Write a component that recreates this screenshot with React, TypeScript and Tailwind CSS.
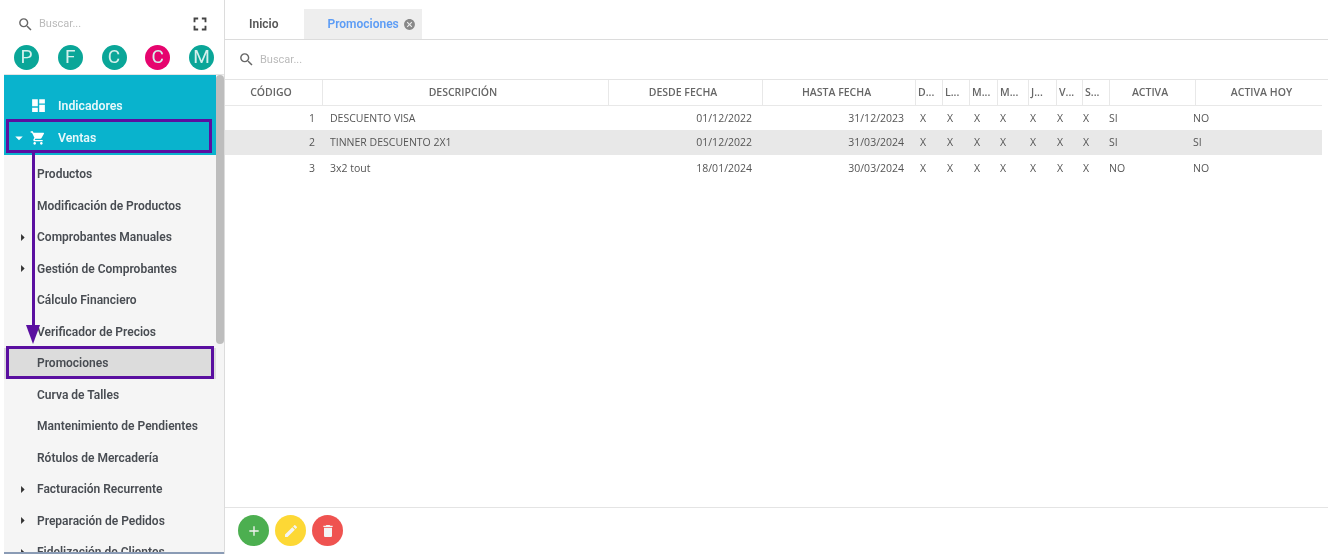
import { MdAdd, MdArrowDropDown, MdArrowRight, MdCancel, MdDashboard, MdDelete, MdEdit, MdFullscreen, MdSearch, MdShoppingCart } from "react-icons/md";

const gridCols = "grid w-[1097px] grid-cols-[98px_286px_154px_153px_27px_27px_28px_31px_28px_26px_27px_86px_126px]";

const shortcuts = [
  { letter: "P", color: "bg-[#0aa698]" },
  { letter: "F", color: "bg-[#0aa698]" },
  { letter: "C", color: "bg-[#0aa698]" },
  { letter: "C", color: "bg-[#e6046e]" },
  { letter: "M", color: "bg-[#0aa698]" },
];

const menuItems = [
  { label: "Productos" },
  { label: "Modificación de Productos" },
  { label: "Comprobantes Manuales", sub: true },
  { label: "Gestión de Comprobantes", sub: true },
  { label: "Cálculo Financiero" },
  { label: "Verificador de Precios" },
  { label: "Promociones", active: true },
  { label: "Curva de Talles" },
  { label: "Mantenimiento de Pendientes" },
  { label: "Rótulos de Mercadería" },
  { label: "Facturación Recurrente", sub: true },
  { label: "Preparación de Pedidos", sub: true },
  { label: "Fidelización de Clientes", sub: true },
];

const columns = ["CÓDIGO", "DESCRIPCIÓN", "DESDE FECHA", "HASTA FECHA", "D...", "L...", "M...", "M...", "J...", "V...", "S...", "ACTIVA", "ACTIVA HOY"];

// the X marks do not sit at the same offset in every day column
const dayCells = [
  { key: "D", pad: "pl-[4px]" },
  { key: "L", pad: "pl-[4px]" },
  { key: "M", pad: "pl-[4px]" },
  { key: "Mi", pad: "pl-[2px]" },
  { key: "J", pad: "pl-[1px]" },
  { key: "V", pad: "pl-0" },
  { key: "S", pad: "pl-0" },
];

const rows = [
  { id: 1, desc: "DESCUENTO VISA", from: "01/12/2022", to: "31/12/2023", active: "SI", today: "NO", pad: "pt-[2px]" },
  { id: 2, desc: "TINNER DESCUENTO 2X1", from: "01/12/2022", to: "31/03/2024", active: "SI", today: "SI", selected: true, pad: "" },
  { id: 3, desc: "3x2 tout", from: "18/01/2024", to: "30/03/2024", active: "NO", today: "NO", pad: "pt-[3px]" },
];

function headerCellClass(i: number) {
  if (i === 12) return "justify-center pl-[5px]";
  if (i < 4 || i === 11) return "justify-center pr-[5px]";
  return "pl-[2px]";
}

function Sidebar() {
  return (
    <aside className="relative flex w-[225px] shrink-0 flex-col border-r border-[#dcdcdc] font-['Roboto',sans-serif]">
      {/* Search and fullscreen */}
      <div className="flex h-[41px] shrink-0 items-center justify-between pl-[17px] pr-[13px] pt-[7px]">
        <div className="flex items-center gap-[5px]">
          <MdSearch className="text-[17px] text-[#666]" />
          <span className="pt-[1px] text-[11px] text-[#bbb]">Buscar...</span>
        </div>
        <MdFullscreen className="text-[22px] text-[#444]" />
      </div>

      {/* Shortcuts */}
      <div className="flex h-[33px] shrink-0 items-center justify-between pl-[14px] pr-[10px]">
        {shortcuts.map((s, i) => (
          <div key={i} className={`flex h-[25px] w-[25px] items-center justify-center rounded-full text-[19px] text-[#d5f0ec] ${s.color}`}>
            {s.letter}
          </div>
        ))}
      </div>

      {/* Menu */}
      <div className="ml-[4px] flex min-h-0 flex-1 border-t border-[#e4e4e4] border-b-2 border-b-[#8a9bb5]">
        <div className="min-w-0 flex-1 overflow-hidden bg-[#f5f5f5]">
          <div className="flex h-[80px] flex-col justify-end bg-[#09b3cd] pb-[2px] text-[12.3px] font-semibold text-[#e8f8fb]">
            <div className="flex h-[31.4px] items-center pl-[26px]">
              <MdDashboard className="text-[17px] text-white" />
              <span className="ml-[11px]">Indicadores</span>
            </div>
            <div className="flex h-[31.4px] items-center pl-[6px] pt-[1px]">
              <MdArrowDropDown className="text-[18px] text-white" />
              <MdShoppingCart className="ml-[2px] text-[16px] text-white" />
              <span className="ml-[12px]">Ventas</span>
            </div>
          </div>
          <div className="pt-[3.6px]">
            {menuItems.map((item) => (
              <div
                key={item.label}
                className={`relative flex h-[31.5px] items-center pl-[33px] text-[12px] font-semibold whitespace-nowrap text-[#484c52] ${item.active ? "bg-[#dcdcdc]" : ""}`}
              >
                {item.sub && <MdArrowRight className="absolute left-[10px] text-[17px] text-[#333]" />}
                {item.label}
              </div>
            ))}
          </div>
        </div>
        {/* Scrollbar */}
        <div className="w-[8px] shrink-0 bg-[#f5f5f5]">
          <div className="h-[269px] w-[8px] rounded-[4px] bg-[#bdbdbd]" />
        </div>
      </div>

      {/* Annotation boxes and arrow */}
      <div className="absolute left-[6px] top-[119px] h-[34px] w-[206px] border-[3px] border-[#5a0fa0]" />
      <div className="absolute left-[6px] top-[346px] h-[33px] w-[208px] border-[3px] border-[#5a0fa0]" />
      <div className="absolute left-[32px] top-[153px] h-[180px] w-[3px] bg-[#5a0fa0]" />
      <svg className="absolute left-[26px] top-[325px]" width="14" height="19" viewBox="0 0 14 19">
        <path d="M0 0 L14 0 L7 19 Z" fill="#5a0fa0" />
      </svg>
    </aside>
  );
}

function Main() {
  return (
    <main className="flex min-w-0 flex-1 flex-col font-['Open_Sans',sans-serif] text-[10.5px] text-[#555]">
      {/* Tabs */}
      <div className="flex h-[40px] shrink-0 items-end border-b border-[#dcdcdc] pl-[24px]">
        <div className="flex h-[30px] items-center font-['Roboto',sans-serif] text-[12px] font-semibold text-[#555]">Inicio</div>
        <div className="ml-[26px] flex h-[30px] w-[118px] items-center gap-[4px] bg-[#eeeeee] pl-[23px] font-['Roboto',sans-serif] text-[12px] font-semibold text-[#5c9cf5]">
          Promociones
          <MdCancel className="text-[13px] text-[#888]" />
        </div>
      </div>

      {/* Search */}
      <div className="flex h-[39.5px] shrink-0 items-center gap-[5px] border-b border-[#e4e4e4] pl-[13px] font-['Roboto',sans-serif]">
        <MdSearch className="text-[17px] text-[#666]" />
        <span className="pt-[1px] text-[11px] text-[#bbb]">Buscar...</span>
      </div>

      {/* Table */}
      <div className="min-h-0 flex-1">
        <div className={`${gridCols} h-[26px] border-b border-[#e8e8e8] font-semibold text-[#666]`}>
          {columns.map((c, i) => (
            <div key={i} className={`flex items-center border-r border-[#e8e8e8] pt-[1px] last:border-r-0 ${headerCellClass(i)}`}>
              {c}
            </div>
          ))}
        </div>
        {rows.map((r) => (
          <div key={r.id} className={`${gridCols} h-[24.7px] items-center ${r.pad} ${r.selected ? "bg-[#e8e8e8]" : ""}`}>
            <div className="pr-[8px] text-right">{r.id}</div>
            <div className="pl-[7px]">{r.desc}</div>
            <div className="pr-[11px] text-right">{r.from}</div>
            <div className="pr-[12px] text-right">{r.to}</div>
            {dayCells.map((d) => (
              <div key={d.key} className={d.pad}>X</div>
            ))}
            <div className="-ml-[1px]">{r.active}</div>
            <div className="-ml-[3px]">{r.today}</div>
          </div>
        ))}
      </div>

      {/* Actions */}
      <div className="flex h-[47px] shrink-0 items-start gap-[6px] border-t border-[#e4e4e4] pl-[13px] pt-[7px] text-[16px] text-[#f4f4f4]">
        <button className="flex h-[31px] w-[31px] items-center justify-center rounded-full bg-[#4caf50]"><MdAdd /></button>
        <button className="flex h-[31px] w-[31px] items-center justify-center rounded-full bg-[#fdd835]"><MdEdit /></button>
        <button className="flex h-[31px] w-[31px] items-center justify-center rounded-full bg-[#ef5350]"><MdDelete /></button>
      </div>
    </main>
  );
}

export default function App() {
  return (
    <div className="flex h-[554px] w-[1328px] overflow-hidden bg-white blur-[0.35px]">
      <Sidebar />
      <Main />
    </div>
  );
}
